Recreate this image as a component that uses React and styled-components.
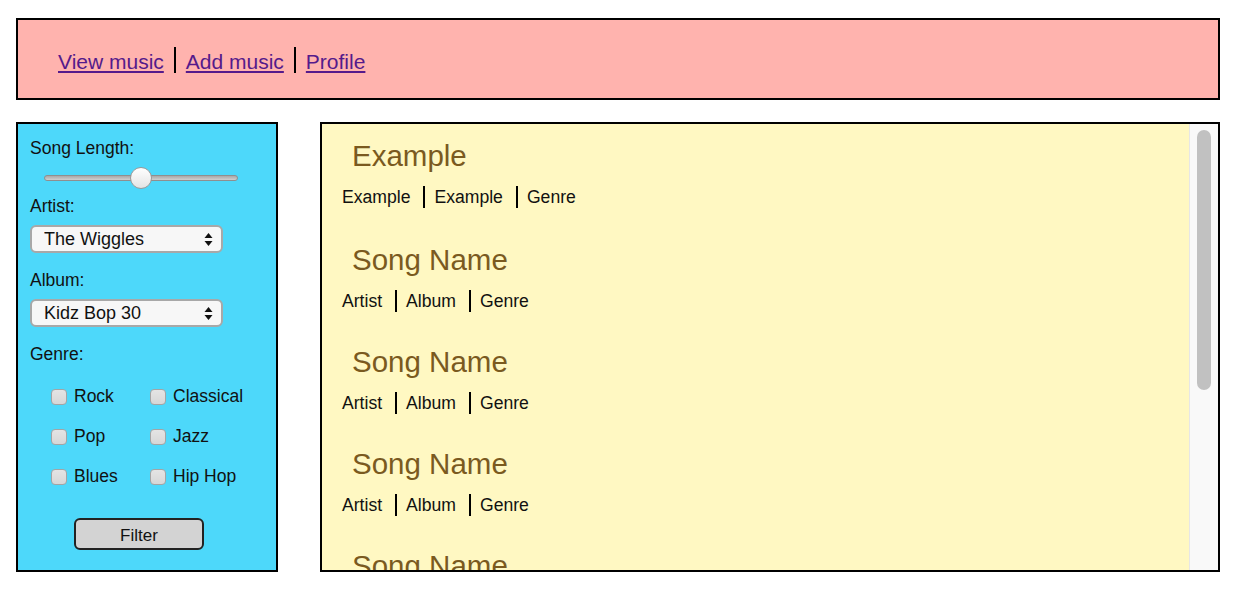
import React from "react";
import styled, { createGlobalStyle } from "styled-components";

const GlobalStyle = createGlobalStyle`
  body {
    margin: 0;
    font-family: "Liberation Sans", Arial, Helvetica, sans-serif;
    background: #fff;
  }
`;

const Page = styled.div`
  padding: 18px 24px 0 16px;
`;

const Header = styled.div`
  box-sizing: border-box;
  height: 82px;
  border: 2px solid #000;
  background: #ffb3ae;
  padding: 27px 0 0 40px;
  font-size: 21px;
`;

const NavItem = styled.span`
  display: inline-block;
  line-height: 23px;
  padding: 3px 10px 0 ${(p) => (p.first ? "0" : "10px")};
  border-left: ${(p) => (p.first ? "none" : "2px solid #000")};

  a {
    color: #551a8b;
  }
`;

const Body = styled.div`
  display: flex;
  gap: 42px;
  margin-top: 22px;
`;

const Sidebar = styled.div`
  box-sizing: border-box;
  width: 262px;
  height: 450px;
  flex-shrink: 0;
  border: 2px solid #000;
  background: #4dd8fa;
  padding: 13px 0 0 12px;
  display: flex;
  flex-direction: column;
  align-items: flex-start;
  font-size: 17.5px;
  color: #111;
`;

const Label = styled.div`
  line-height: 22px;
  margin-top: ${(p) => p.mt || 0}px;
`;

const Range = styled.input`
  -webkit-appearance: none;
  appearance: none;
  width: 194px;
  height: 22px;
  margin: 8px 0 0 14px;
  background: transparent;

  &::-webkit-slider-runnable-track {
    height: 6px;
    border-radius: 3px;
    border: 1px solid #8f8f8f;
    background: linear-gradient(#a9a9a9, #cfcfcf);
  }

  &::-webkit-slider-thumb {
    -webkit-appearance: none;
    width: 22px;
    height: 22px;
    margin-top: -9px;
    border-radius: 50%;
    border: 1px solid #9a9a9a;
    background: linear-gradient(#ffffff, #e4e4e4);
  }
`;

const SelectWrap = styled.div`
  position: relative;
  margin-top: 8px;
`;

const Select = styled.select`
  -webkit-appearance: none;
  appearance: none;
  box-sizing: border-box;
  width: 193px;
  height: 28px;
  border: 2px solid #a8a8a8;
  border-radius: 6px;
  background: #f7f7f7;
  padding: 0 0 0 12px;
  font-family: "Liberation Sans", Arial, sans-serif;
  font-size: 18px;
  color: #111;
`;

const Arrows = styled.svg`
  position: absolute;
  right: 10px;
  top: 7px;
  pointer-events: none;
`;

const GenreGrid = styled.div`
  display: grid;
  grid-template-columns: 99px 99px;
  row-gap: 18px;
  margin: 20px 0 0 21px;
`;

const Check = styled.label`
  display: flex;
  align-items: center;
  gap: 7px;
  line-height: 22px;

  input {
    -webkit-appearance: none;
    appearance: none;
    box-sizing: border-box;
    width: 16px;
    height: 16px;
    margin: 2px 0 0 0;
    border: 1.5px solid #a4a4a4;
    border-radius: 4px;
    background: linear-gradient(#e4e4e4, #d7d7d7);
  }
`;

const FilterButton = styled.button`
  box-sizing: border-box;
  width: 130px;
  height: 32px;
  margin: 31px 0 0 44px;
  border: 2px solid #222;
  border-radius: 6px;
  background: #d3d3d3;
  font-family: "Liberation Sans", Arial, sans-serif;
  font-size: 17px;
  color: #111;
  padding: 4px 0 0 0;
`;

const SongPanel = styled.div`
  box-sizing: border-box;
  flex: 1;
  height: 450px;
  border: 2px solid #000;
  background: #fff8c2;
  display: flex;
`;

const SongList = styled.div`
  flex: 1;
  overflow: hidden;
  padding-top: 15px;
`;

const ScrollTrack = styled.div`
  width: 29px;
  flex-shrink: 0;
  background: #f9f9f9;
  border-left: 1px solid #e6e6e6;
  box-sizing: border-box;
  padding: 6px 7px 0 7px;
`;

const ScrollThumb = styled.div`
  height: 260px;
  border-radius: 8px;
  background: #c1c1c1;
`;

const Song = styled.div`
  margin-bottom: 33px;

  &:first-child {
    margin-bottom: 35px;
  }
`;

const Title = styled.div`
  font-size: 29.5px;
  line-height: 34px;
  color: #7a5a1f;
  padding-left: 30px;
  white-space: nowrap;
`;

const Meta = styled.div`
  margin-top: 13px;
  padding-left: 20px;
  font-size: 17.6px;
  color: #111;
`;

const MetaItem = styled.span`
  display: inline-block;
  line-height: 22px;
  padding: 0 13px 0 ${(p) => (p.first ? "0" : "9px")};
  border-left: ${(p) => (p.first ? "none" : "2px solid #000")};
`;

const songs = [
  { name: "Example", artist: "Example", album: "Example", genre: "Genre" },
  ...Array.from({ length: 6 }, () => ({
    name: "Song Name",
    artist: "Artist",
    album: "Album",
    genre: "Genre",
  })),
];

const genres = ["Rock", "Classical", "Pop", "Jazz", "Blues", "Hip Hop"];

function UpDown() {
  return (
    <Arrows width="9" height="15" viewBox="0 0 9 15">
      <path d="M4.5 1 L8.5 6 L0.5 6 Z" fill="#111" />
      <path d="M0.5 9 L8.5 9 L4.5 14 Z" fill="#111" />
    </Arrows>
  );
}

export default function App() {
  return (
    <>
      <GlobalStyle />
      <Page>
        <Header>
          <NavItem first>
            <a href="#view">View music</a>
          </NavItem>
          <NavItem>
            <a href="#add">Add music</a>
          </NavItem>
          <NavItem>
            <a href="#profile">Profile</a>
          </NavItem>
        </Header>
        <Body>
          <Sidebar>
            <Label>Song Length:</Label>
            <Range type="range" min="0" max="100" defaultValue="50" />
            <Label mt={6}>Artist:</Label>
            <SelectWrap>
              <Select defaultValue="wiggles">
                <option value="wiggles">The Wiggles</option>
              </Select>
              <UpDown />
            </SelectWrap>
            <Label mt={16}>Album:</Label>
            <SelectWrap>
              <Select defaultValue="kidz">
                <option value="kidz">Kidz Bop 30</option>
              </Select>
              <UpDown />
            </SelectWrap>
            <Label mt={16}>Genre:</Label>
            <GenreGrid>
              {genres.map((g) => (
                <Check key={g}>
                  <input type="checkbox" />
                  {g}
                </Check>
              ))}
            </GenreGrid>
            <FilterButton>Filter</FilterButton>
          </Sidebar>
          <SongPanel>
            <SongList>
              {songs.map((s, i) => (
                <Song key={i}>
                  <Title>{s.name}</Title>
                  <Meta>
                    <MetaItem first>{s.artist}</MetaItem>
                    <MetaItem>{s.album}</MetaItem>
                    <MetaItem>{s.genre}</MetaItem>
                  </Meta>
                </Song>
              ))}
            </SongList>
            <ScrollTrack>
              <ScrollThumb />
            </ScrollTrack>
          </SongPanel>
        </Body>
      </Page>
    </>
  );
}
